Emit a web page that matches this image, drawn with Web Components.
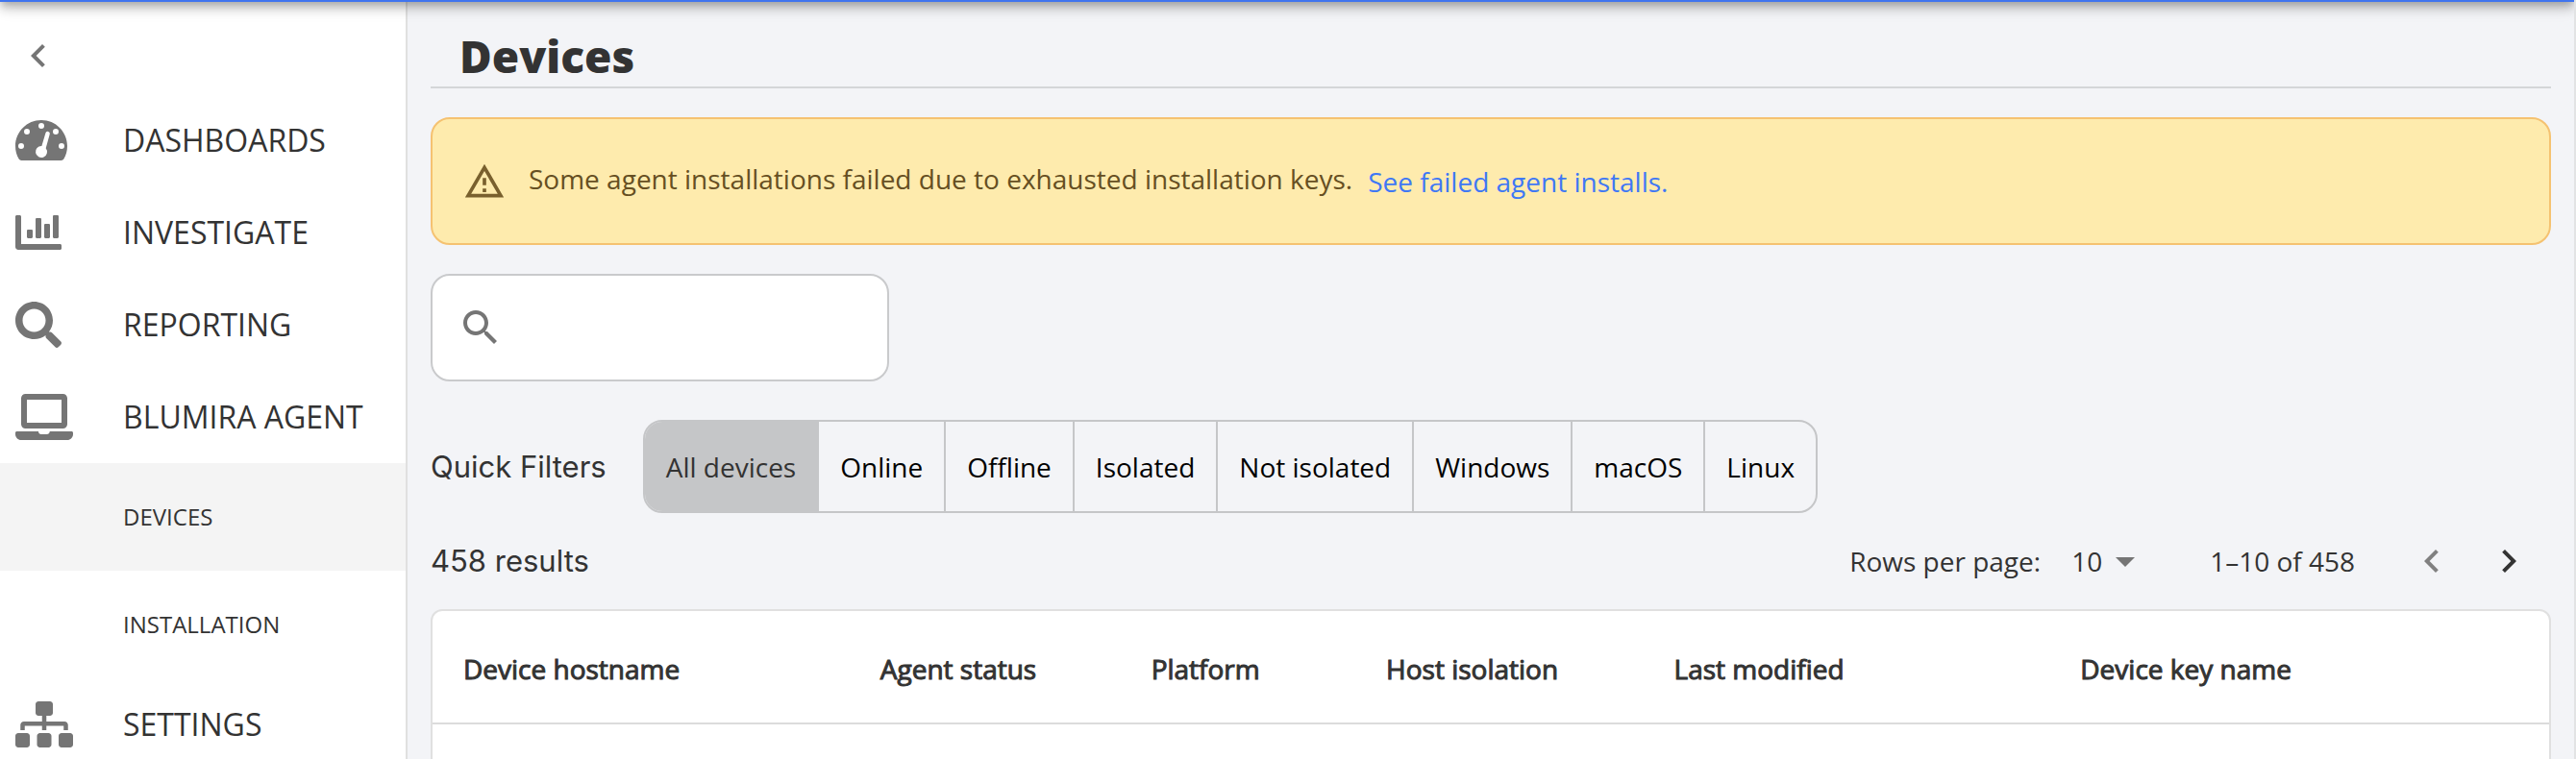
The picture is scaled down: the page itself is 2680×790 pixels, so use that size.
<!DOCTYPE html>
<html lang="en">
<head>
<meta charset="utf-8">
<meta name="viewport" content="width=device-width, initial-scale=1">
<title>Devices</title>
<style>
  body {
    margin: 0;
    height: 100vh;
    overflow: hidden;
    display: flex;
    flex-direction: column;
    box-sizing: border-box;
    border-right: 2px solid #e2e3e4;
    background: #f3f4f7;
    color: #333333;
    font-family: "Open Sans", sans-serif;
    font-size: 28px;
    line-height: 40px;
    --text: #333333;
    --muted: #757575;
    --line: #c5c6c8;
    --radius: 20px;
  }
  .layout {
    flex: 1;
    display: flex;
    min-height: 0;
    overflow: hidden;
  }
  main {
    flex: 1;
    min-width: 0;
    padding: 0 24px;
  }
</style>
</head>
<body>
  <app-header></app-header>
  <div class="layout">
    <side-nav>
      <nav-item icon="dashboard">DASHBOARDS</nav-item>
      <nav-item icon="chart">INVESTIGATE</nav-item>
      <nav-item icon="magnifier">REPORTING</nav-item>
      <nav-item icon="laptop">BLUMIRA AGENT</nav-item>
      <nav-item sub active>DEVICES</nav-item>
      <nav-item sub>INSTALLATION</nav-item>
      <nav-item icon="sitemap">SETTINGS</nav-item>
    </side-nav>
    <main>
      <page-title>Devices</page-title>
      <alert-banner>
        Some agent installations failed due to exhausted installation keys.
        <a-link slot="action">See failed agent installs.</a-link>
      </alert-banner>
      <search-field></search-field>
      <quick-filters></quick-filters>
      <results-bar></results-bar>
      <device-table></device-table>
    </main>
  </div>

<script>
const ICONS = {
  dashboard: ["0 0 576 512", "M288 32C128.94 32 0 160.94 0 320c0 52.8 14.25 102.26 39.06 144.8 5.61 9.62 16.3 15.2 27.44 15.2h443c11.14 0 21.83-5.58 27.44-15.2C561.75 422.26 576 372.8 576 320c0-159.06-128.94-288-288-288zM288 64a32 32 0 1 1 0 64a32 32 0 1 1 0-64zM128 128a32 32 0 1 1 0 64a32 32 0 1 1 0-64zM448 128a32 32 0 1 1 0 64a32 32 0 1 1 0-64zM64 288a32 32 0 1 1 0 64a32 32 0 1 1 0-64zM512 288a32 32 0 1 1 0 64a32 32 0 1 1 0-64zM335 176a24 24 0 0 1 46 14L338 344a64 64 0 1 1-46-24z"],
  chart: ["0 0 512 512", "M332.8 320h38.4c6.4 0 12.8-6.4 12.8-12.8V172.8c0-6.4-6.4-12.8-12.8-12.8h-38.4c-6.4 0-12.8 6.4-12.8 12.8v134.4c0 6.4 6.4 12.8 12.8 12.8zm96 0h38.4c6.4 0 12.8-6.4 12.8-12.8V76.8c0-6.4-6.4-12.8-12.8-12.8h-38.4c-6.4 0-12.8 6.4-12.8 12.8v230.4c0 6.4 6.4 12.8 12.8 12.8zm-288 0h38.4c6.4 0 12.8-6.4 12.8-12.8v-70.4c0-6.4-6.4-12.8-12.8-12.8h-38.4c-6.4 0-12.8 6.4-12.8 12.8v70.4c0 6.4 6.4 12.8 12.8 12.8zm96 0h38.4c6.4 0 12.8-6.4 12.8-12.8V108.8c0-6.4-6.4-12.8-12.8-12.8h-38.4c-6.4 0-12.8 6.4-12.8 12.8v198.4c0 6.4 6.4 12.8 12.8 12.8zM496 384H64V80c0-8.84-7.16-16-16-16H16C7.16 64 0 71.16 0 80v336c0 17.67 14.33 32 32 32h464c8.84 0 16-7.16 16-16v-32c0-8.84-7.16-16-16-16z"],
  magnifier: ["0 0 512 512", "M505 442.7L405.3 343c-4.5-4.5-10.6-7-17-7H372c27.6-35.3 44-79.7 44-128C416 93.1 322.9 0 208 0S0 93.1 0 208s93.1 208 208 208c48.3 0 92.7-16.4 128-44v16.3c0 6.4 2.5 12.5 7 17l99.7 99.7c9.4 9.4 24.6 9.4 33.9 0l28.3-28.3c9.4-9.4 9.4-24.6.1-34zM208 336c-70.7 0-128-57.2-128-128 0-70.7 57.2-128 128-128 70.7 0 128 57.2 128 128 0 70.7-57.2 128-128 128z"],
  laptop: ["0 0 640 512", "M112 0h416c26.5 0 48 21.5 48 48v288c0 26.5-21.5 48-48 48H112c-26.5 0-48-21.5-48-48V48C64 21.5 85.5 0 112 0zm16 64v256h384V64zM16 416h239.2c2 18 14 32 32.8 32h60.8c18 0 31-14 33-32H624c8.8 0 16 7.2 16 16v16c0 35.2-28.8 64-64 64H64c-35.2 0-64-28.8-64-64v-16c0-8.8 7.2-16 16-16z"],
  sitemap: ["0 0 640 512", "M128 352H32c-17.67 0-32 14.33-32 32v96c0 17.67 14.33 32 32 32h96c17.67 0 32-14.33 32-32v-96c0-17.67-14.33-32-32-32zm-24-80h192v48h48v-48h192v48h48v-57.59c0-21.17-17.23-38.41-38.41-38.41H344v-64h40c17.67 0 32-14.33 32-32V32c0-17.67-14.33-32-32-32H256c-17.67 0-32 14.33-32 32v96c0 17.67 14.33 32 32 32h40v64H94.41C73.23 224 56 241.23 56 262.41V320h48v-48zm264 80h-96c-17.67 0-32 14.33-32 32v96c0 17.67 14.33 32 32 32h96c17.67 0 32-14.33 32-32v-96c0-17.67-14.33-32-32-32zm240 0h-96c-17.67 0-32 14.33-32 32v96c0 17.67 14.33 32 32 32h96c17.67 0 32-14.33 32-32v-96c0-17.67-14.33-32-32-32z"],
  left: ["0 0 24 24", "M15.41 7.41L14 6l-6 6 6 6 1.41-1.41L10.83 12z"],
  right: ["0 0 24 24", "M10 6L8.59 7.41 13.17 12l-4.58 4.59L10 18l6-6z"],
  dropdown: ["0 0 24 24", "M7 10l5 5 5-5z"],
  search: ["0 0 24 24", "M15.5 14h-.79l-.28-.27C15.41 12.59 16 11.11 16 9.5 16 5.91 13.09 3 9.5 3S3 5.91 3 9.5 5.91 16 9.5 16c1.61 0 3.09-.59 4.23-1.57l.27.28v.79l5 4.99L20.49 19l-4.99-5zm-6 0C7.01 14 5 11.99 5 9.5S7.01 5 9.5 5 14 7.01 14 9.5 11.99 14 9.5 14z"],
  warning: ["0 0 24 24", "M12 5.99L19.53 19H4.47L12 5.99M12 2L1 21h22L12 2zm1 14h-2v2h2v-2zm0-6h-2v4h2v-4z"],
};

function icon(name) {
  const [box, path] = ICONS[name];
  return `<svg class="icon" viewBox="${box}" aria-hidden="true"><path fill="currentColor" fill-rule="evenodd" d="${path}"/></svg>`;
}

class AppHeader extends HTMLElement {
  constructor() {
    super();
    this.attachShadow({ mode: "open" });
  }

  connectedCallback() {
    this.shadowRoot.innerHTML = `
      <style>
        :host {
          display: block;
          position: relative;
          z-index: 10;
          flex: none;
          height: 64px;
          margin-top: -62px;
          background: #3f74ef;
          box-shadow: 0 4px 8px -2px rgba(0, 0, 0, 0.2),
            0 8px 10px 0 rgba(0, 0, 0, 0.14),
            0 2px 20px 0 rgba(0, 0, 0, 0.12);
        }
      </style>
    `;
  }
}

class SideNav extends HTMLElement {
  constructor() {
    super();
    this.attachShadow({ mode: "open" });
  }

  connectedCallback() {
    this.shadowRoot.innerHTML = `
      <style>
        :host {
          display: block;
          flex: none;
          width: 422px;
          background: #ffffff;
          border-right: 2px solid #e0e0e0;
        }
        button {
          display: block;
          height: 96px;
          padding: 16px 16px 0;
          border: 0;
          background: none;
          color: var(--muted);
        }
        .icon {
          display: block;
          width: 48px;
          height: 48px;
        }
      </style>
      <button type="button" aria-label="Collapse menu">${icon("left")}</button>
      <nav><slot></slot></nav>
    `;
  }
}

class NavItem extends HTMLElement {
  constructor() {
    super();
    this.attachShadow({ mode: "open" });
  }

  connectedCallback() {
    const name = this.getAttribute("icon");
    this.shadowRoot.innerHTML = `
      <style>
        :host {
          display: block;
          font-size: 32px;
        }
        :host([sub]) {
          font-size: 24px;
        }
        a {
          display: grid;
          grid-template-columns: 112px 1fr;
          align-items: center;
          height: 96px;
          padding-left: 16px;
          color: var(--text);
          text-decoration: none;
          white-space: nowrap;
        }
        :host([sub]) a {
          height: 112px;
        }
        :host([active]) a {
          background: #f4f4f4;
        }
        .icon {
          display: block;
          height: 48px;
          color: var(--muted);
        }
      </style>
      <a href="#"><span>${name ? icon(name) : ""}</span><slot></slot></a>
    `;
  }
}

class PageTitle extends HTMLElement {
  constructor() {
    super();
    this.attachShadow({ mode: "open" });
  }

  connectedCallback() {
    this.shadowRoot.innerHTML = `
      <style>
        :host {
          display: block;
          padding: 24px 30px 0;
          border-bottom: 2px solid #d4d6d8;
        }
        h1 {
          margin: 0;
          font-size: 46px;
          font-weight: 800;
          line-height: 64px;
        }
      </style>
      <h1><slot></slot></h1>
    `;
  }
}

class ALink extends HTMLElement {
  constructor() {
    super();
    this.attachShadow({ mode: "open" });
  }

  connectedCallback() {
    this.shadowRoot.innerHTML = `
      <style>
        :host {
          display: block;
        }
        a {
          color: #3f78f5;
          text-decoration: none;
        }
      </style>
      <a href="#"><slot></slot></a>
    `;
  }
}

class AlertBanner extends HTMLElement {
  constructor() {
    super();
    this.attachShadow({ mode: "open" });
  }

  connectedCallback() {
    this.shadowRoot.innerHTML = `
      <style>
        :host {
          display: flex;
          align-items: center;
          box-sizing: border-box;
          min-height: 133px;
          margin-top: 30px;
          padding: 0 32px;
          border: 2px solid #f5c271;
          border-radius: var(--radius);
          background: #feebad;
          color: #664f22;
        }
        .icon {
          flex: none;
          width: 44px;
          height: 44px;
          margin-right: 24px;
          color: #79602d;
        }
        .message {
          padding-bottom: 6px;
        }
        ::slotted([slot="action"]) {
          margin-left: 16px;
        }
      </style>
      ${icon("warning")}
      <div class="message" role="alert"><slot></slot></div>
      <slot name="action"></slot>
    `;
  }
}

class SearchField extends HTMLElement {
  constructor() {
    super();
    this.attachShadow({ mode: "open" });
  }

  connectedCallback() {
    this.shadowRoot.innerHTML = `
      <style>
        :host {
          display: block;
          margin-top: 30px;
        }
        label {
          display: flex;
          align-items: center;
          box-sizing: border-box;
          width: 477px;
          max-width: 100%;
          height: 112px;
          padding: 0 26px;
          border: 2px solid #c9cacc;
          border-radius: var(--radius);
          background: #ffffff;
          color: var(--muted);
        }
        .icon {
          flex: none;
          width: 48px;
          height: 48px;
        }
        input {
          flex: 1;
          min-width: 0;
          margin-left: 16px;
          border: 0;
          outline: 0;
          background: none;
          color: var(--text);
          font: inherit;
        }
      </style>
      <label>${icon("search")}<input type="search" aria-label="Search devices"></label>
    `;
  }
}

class QuickFilters extends HTMLElement {
  constructor() {
    super();
    this.attachShadow({ mode: "open" });
    this.filters = ["All devices", "Online", "Offline", "Isolated", "Not isolated", "Windows", "macOS", "Linux"];
    this.selected = 0;
  }

  connectedCallback() {
    this.render();
    this.shadowRoot.addEventListener("click", (event) => {
      const button = event.target.closest("button");
      if (!button) return;
      this.selected = Number(button.dataset.index);
      this.render();
    });
  }

  render() {
    const buttons = this.filters
      .map((name, i) => `<button type="button" data-index="${i}" aria-pressed="${i === this.selected}">${name}</button>`)
      .join("");
    this.shadowRoot.innerHTML = `
      <style>
        :host {
          display: flex;
          align-items: center;
          gap: 38px;
          margin-top: 40px;
        }
        .label {
          font-family: Inter, sans-serif;
          font-size: 31px;
        }
        .group {
          display: flex;
          overflow: hidden;
          border: 2px solid var(--line);
          border-radius: var(--radius);
        }
        button {
          height: 93px;
          padding: 0 22px;
          border: 0;
          background: none;
          color: #000000;
          font: inherit;
          white-space: nowrap;
        }
        button + button {
          border-left: 2px solid var(--line);
        }
        button[aria-pressed="true"] {
          background: var(--line);
          color: var(--text);
        }
      </style>
      <span class="label" id="label">Quick Filters</span>
      <div class="group" role="group" aria-labelledby="label">${buttons}</div>
    `;
  }
}

class ResultsBar extends HTMLElement {
  constructor() {
    super();
    this.attachShadow({ mode: "open" });
  }

  connectedCallback() {
    this.shadowRoot.innerHTML = `
      <style>
        :host {
          display: flex;
          align-items: center;
          justify-content: space-between;
          height: 100px;
          padding-right: 4px;
        }
        .count {
          font-family: Inter, sans-serif;
          font-size: 31px;
        }
        .pager {
          display: flex;
          align-items: center;
        }
        .select {
          position: relative;
          margin: 0 64px 0 32px;
        }
        .select .icon {
          position: absolute;
          top: 0;
          right: 0;
          color: var(--muted);
          pointer-events: none;
        }
        select {
          display: block;
          appearance: none;
          width: 80px;
          height: 48px;
          padding: 0;
          border: 0;
          background: none;
          color: inherit;
          font: inherit;
        }
        button {
          padding: 16px;
          border: 0;
          background: none;
          color: inherit;
        }
        button:disabled {
          color: #808080;
        }
        .range {
          margin-right: 40px;
        }
        .icon {
          display: block;
          width: 48px;
          height: 48px;
        }
      </style>
      <span class="count">458 results</span>
      <div class="pager">
        <label for="rows">Rows per page:</label>
        <div class="select">
          <select id="rows">
            <option>10</option>
            <option>25</option>
            <option>50</option>
          </select>
          ${icon("dropdown")}
        </div>
        <span class="range">1–10 of 458</span>
        <button type="button" aria-label="Previous page" disabled>${icon("left")}</button>
        <button type="button" aria-label="Next page">${icon("right")}</button>
      </div>
    `;
  }
}

class DeviceTable extends HTMLElement {
  constructor() {
    super();
    this.attachShadow({ mode: "open" });
  }

  connectedCallback() {
    this.shadowRoot.innerHTML = `
      <style>
        :host {
          display: block;
          border: 2px solid #e0e0e0;
          border-radius: 12px;
          background: #ffffff;
        }
        table {
          width: 100%;
          table-layout: fixed;
          border-collapse: separate;
          border-spacing: 0;
        }
        th {
          height: 40px;
          padding: 40px 32px 36px;
          border-bottom: 2px solid #dcdcdc;
          font-weight: 400;
          -webkit-text-stroke: 1px currentColor;
          text-align: left;
          white-space: nowrap;
        }
        td {
          height: 116px;
          padding: 0 32px;
        }
      </style>
      <table>
        <colgroup>
          <col style="width: 19.7%">
          <col style="width: 12.8%">
          <col style="width: 11.1%">
          <col style="width: 13.6%">
          <col style="width: 19.2%">
          <col style="width: 23.6%">
        </colgroup>
        <thead>
          <tr>
            <th scope="col">Device hostname</th>
            <th scope="col">Agent status</th>
            <th scope="col">Platform</th>
            <th scope="col">Host isolation</th>
            <th scope="col">Last modified</th>
            <th scope="col">Device key name</th>
          </tr>
        </thead>
        <tbody>
          <tr><td></td><td></td><td></td><td></td><td></td><td></td></tr>
        </tbody>
      </table>
    `;
  }
}

customElements.define("app-header", AppHeader);
customElements.define("side-nav", SideNav);
customElements.define("nav-item", NavItem);
customElements.define("page-title", PageTitle);
customElements.define("a-link", ALink);
customElements.define("alert-banner", AlertBanner);
customElements.define("search-field", SearchField);
customElements.define("quick-filters", QuickFilters);
customElements.define("results-bar", ResultsBar);
customElements.define("device-table", DeviceTable);
</script>
</body>
</html>
